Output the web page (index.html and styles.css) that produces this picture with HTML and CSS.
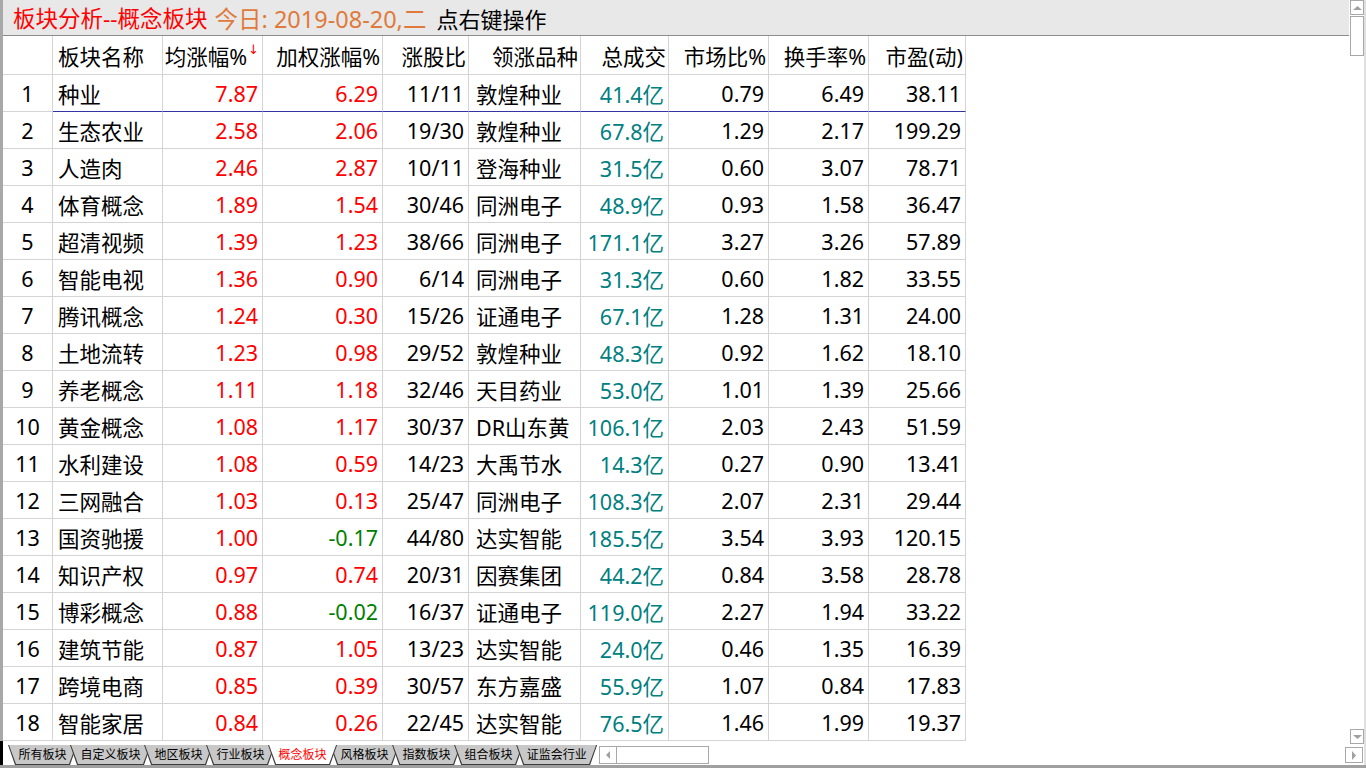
FILE: index.html
```html
<!DOCTYPE html>
<html lang="zh-CN">
<head>
<meta charset="utf-8">
<title>板块分析</title>
<link rel="stylesheet" href="styles.css">
</head>
<body>
<div class="app">
  <div class="main">
    <div class="titlebar">
      <span class="t-red">板块分析--概念板块</span>
      <span class="t-orange">今日: 2019-08-20,二</span>
      <span class="t-black">点右键操作</span>
    </div>
    <div class="grid">
      <div class="row head">
        <div class="c num"></div>
        <div class="c name">板块名称</div>
        <div class="c r">均涨幅%<span class="arrow">↓</span></div>
        <div class="c r">加权涨幅%</div>
        <div class="c r">涨股比</div>
        <div class="c r">领涨品种</div>
        <div class="c r">总成交</div>
        <div class="c r">市场比%</div>
        <div class="c r">换手率%</div>
        <div class="c r">市盈(动)</div>
      </div>
      <div class="row sel">
        <div class="c num">1</div><div class="c name">种业</div><div class="c r up">7.87</div><div class="c r up">6.29</div><div class="c r">11/11</div><div class="c lead">敦煌种业</div><div class="c r amt">41.4亿</div><div class="c r">0.79</div><div class="c r">6.49</div><div class="c r">38.11</div>
      </div>
      <div class="row">
        <div class="c num">2</div><div class="c name">生态农业</div><div class="c r up">2.58</div><div class="c r up">2.06</div><div class="c r">19/30</div><div class="c lead">敦煌种业</div><div class="c r amt">67.8亿</div><div class="c r">1.29</div><div class="c r">2.17</div><div class="c r">199.29</div>
      </div>
      <div class="row">
        <div class="c num">3</div><div class="c name">人造肉</div><div class="c r up">2.46</div><div class="c r up">2.87</div><div class="c r">10/11</div><div class="c lead">登海种业</div><div class="c r amt">31.5亿</div><div class="c r">0.60</div><div class="c r">3.07</div><div class="c r">78.71</div>
      </div>
      <div class="row">
        <div class="c num">4</div><div class="c name">体育概念</div><div class="c r up">1.89</div><div class="c r up">1.54</div><div class="c r">30/46</div><div class="c lead">同洲电子</div><div class="c r amt">48.9亿</div><div class="c r">0.93</div><div class="c r">1.58</div><div class="c r">36.47</div>
      </div>
      <div class="row">
        <div class="c num">5</div><div class="c name">超清视频</div><div class="c r up">1.39</div><div class="c r up">1.23</div><div class="c r">38/66</div><div class="c lead">同洲电子</div><div class="c r amt">171.1亿</div><div class="c r">3.27</div><div class="c r">3.26</div><div class="c r">57.89</div>
      </div>
      <div class="row">
        <div class="c num">6</div><div class="c name">智能电视</div><div class="c r up">1.36</div><div class="c r up">0.90</div><div class="c r">6/14</div><div class="c lead">同洲电子</div><div class="c r amt">31.3亿</div><div class="c r">0.60</div><div class="c r">1.82</div><div class="c r">33.55</div>
      </div>
      <div class="row">
        <div class="c num">7</div><div class="c name">腾讯概念</div><div class="c r up">1.24</div><div class="c r up">0.30</div><div class="c r">15/26</div><div class="c lead">证通电子</div><div class="c r amt">67.1亿</div><div class="c r">1.28</div><div class="c r">1.31</div><div class="c r">24.00</div>
      </div>
      <div class="row">
        <div class="c num">8</div><div class="c name">土地流转</div><div class="c r up">1.23</div><div class="c r up">0.98</div><div class="c r">29/52</div><div class="c lead">敦煌种业</div><div class="c r amt">48.3亿</div><div class="c r">0.92</div><div class="c r">1.62</div><div class="c r">18.10</div>
      </div>
      <div class="row">
        <div class="c num">9</div><div class="c name">养老概念</div><div class="c r up">1.11</div><div class="c r up">1.18</div><div class="c r">32/46</div><div class="c lead">天目药业</div><div class="c r amt">53.0亿</div><div class="c r">1.01</div><div class="c r">1.39</div><div class="c r">25.66</div>
      </div>
      <div class="row">
        <div class="c num">10</div><div class="c name">黄金概念</div><div class="c r up">1.08</div><div class="c r up">1.17</div><div class="c r">30/37</div><div class="c lead">DR山东黄</div><div class="c r amt">106.1亿</div><div class="c r">2.03</div><div class="c r">2.43</div><div class="c r">51.59</div>
      </div>
      <div class="row">
        <div class="c num">11</div><div class="c name">水利建设</div><div class="c r up">1.08</div><div class="c r up">0.59</div><div class="c r">14/23</div><div class="c lead">大禹节水</div><div class="c r amt">14.3亿</div><div class="c r">0.27</div><div class="c r">0.90</div><div class="c r">13.41</div>
      </div>
      <div class="row">
        <div class="c num">12</div><div class="c name">三网融合</div><div class="c r up">1.03</div><div class="c r up">0.13</div><div class="c r">25/47</div><div class="c lead">同洲电子</div><div class="c r amt">108.3亿</div><div class="c r">2.07</div><div class="c r">2.31</div><div class="c r">29.44</div>
      </div>
      <div class="row">
        <div class="c num">13</div><div class="c name">国资驰援</div><div class="c r up">1.00</div><div class="c r down">-0.17</div><div class="c r">44/80</div><div class="c lead">达实智能</div><div class="c r amt">185.5亿</div><div class="c r">3.54</div><div class="c r">3.93</div><div class="c r">120.15</div>
      </div>
      <div class="row">
        <div class="c num">14</div><div class="c name">知识产权</div><div class="c r up">0.97</div><div class="c r up">0.74</div><div class="c r">20/31</div><div class="c lead">因赛集团</div><div class="c r amt">44.2亿</div><div class="c r">0.84</div><div class="c r">3.58</div><div class="c r">28.78</div>
      </div>
      <div class="row">
        <div class="c num">15</div><div class="c name">博彩概念</div><div class="c r up">0.88</div><div class="c r down">-0.02</div><div class="c r">16/37</div><div class="c lead">证通电子</div><div class="c r amt">119.0亿</div><div class="c r">2.27</div><div class="c r">1.94</div><div class="c r">33.22</div>
      </div>
      <div class="row">
        <div class="c num">16</div><div class="c name">建筑节能</div><div class="c r up">0.87</div><div class="c r up">1.05</div><div class="c r">13/23</div><div class="c lead">达实智能</div><div class="c r amt">24.0亿</div><div class="c r">0.46</div><div class="c r">1.35</div><div class="c r">16.39</div>
      </div>
      <div class="row">
        <div class="c num">17</div><div class="c name">跨境电商</div><div class="c r up">0.85</div><div class="c r up">0.39</div><div class="c r">30/57</div><div class="c lead">东方嘉盛</div><div class="c r amt">55.9亿</div><div class="c r">1.07</div><div class="c r">0.84</div><div class="c r">17.83</div>
      </div>
      <div class="row">
        <div class="c num">18</div><div class="c name">智能家居</div><div class="c r up">0.84</div><div class="c r up">0.26</div><div class="c r">22/45</div><div class="c lead">达实智能</div><div class="c r amt">76.5亿</div><div class="c r">1.46</div><div class="c r">1.99</div><div class="c r">19.37</div>
      </div>
    </div>
    <div class="bottombar">
      <div class="tabs">
        <div class="tab"><div class="tab-in">所有板块</div></div>
        <div class="tab"><div class="tab-in">自定义板块</div></div>
        <div class="tab"><div class="tab-in">地区板块</div></div>
        <div class="tab"><div class="tab-in">行业板块</div></div>
        <div class="tab active"><div class="tab-in">概念板块</div></div>
        <div class="tab"><div class="tab-in">风格板块</div></div>
        <div class="tab"><div class="tab-in">指数板块</div></div>
        <div class="tab"><div class="tab-in">组合板块</div></div>
        <div class="tab"><div class="tab-in">证监会行业</div></div>
      </div>
      <div class="hscroll">
        <div class="hs-btn"><svg width="6" height="8" viewBox="0 0 6 8"><polygon points="5,0 5,8 1,4" fill="#a0a0a0"/></svg></div>
        <div class="hs-track"></div>
      </div>
    </div>
  </div>
  <div class="vscroll">
    <div class="vs-btn"><svg width="9" height="6" viewBox="0 0 9 6"><polygon points="0,5 9,5 4.5,1" fill="#a0a0a0"/></svg></div>
    <div class="vs-thumb"></div>
    <div class="vs-space"></div>
    <div class="vs-btn"><svg width="9" height="6" viewBox="0 0 9 6"><polygon points="0,1 9,1 4.5,5" fill="#a0a0a0"/></svg></div>
    <div class="vs-corner"><div class="vs-btn right"><svg width="6" height="9" viewBox="0 0 6 9"><polygon points="1,0 1,9 5,4.5" fill="#a0a0a0"/></svg></div></div>
  </div>
</div>
<div class="bottomline"></div>
</body>
</html>
```

FILE: styles.css
```css
html, body {
  margin: 0;
  padding: 0;
  background: #ffffff;
}
body {
  width: 1366px;
  height: 768px;
  overflow: hidden;
  font-family: "Noto Sans", "Noto Sans CJK SC", sans-serif;
  color: #000;
}
.app {
  display: flex;
  height: 765px;
}
.main {
  width: 1345px;
  border-left: 3px solid #a8a8a8;
  display: flex;
  flex-direction: column;
}
.titlebar {
  height: 35px;
  border-bottom: 1px solid #8c8c8c;
  background: #e8e8e8;
  display: flex;
  align-items: center;
  padding-left: 10px;
  font-size: 22.5px;
  white-space: nowrap;
  width: 1336px;
}
.t-red { color: #ff0000; }
.t-orange { color: #e07a3c; margin-left: 7px; font-size: 23.5px; }
.t-black { color: #000; margin-left: 10px; font-size: 22px; }
.grid {
  height: 705px;
  overflow: hidden;
}
.row {
  display: grid;
  grid-template-columns: 50px 110px 100px 120px 86px 112px 88px 100px 100px 97px;
  height: 37px;
}
.row.head {
  height: 39px;
}
.c {
  box-sizing: border-box;
  border-right: 1px solid #d4d4d4;
  border-bottom: 1px solid #d4d4d4;
  display: flex;
  align-items: center;
  font-size: 21.5px;
  white-space: nowrap;
  overflow: hidden;
}
.c.num {
  justify-content: center;
}
.c.name {
  padding-left: 5px;
}
.c.lead {
  padding-left: 7px;
}
.c.r {
  justify-content: flex-end;
  padding-right: 4px;
}
.row.head .c.r {
  padding-right: 2px;
}
.arrow {
  color: #ff0000;
  font-size: 13px;
  align-self: flex-start;
  margin-top: 6px;
  margin-left: 1px;
  margin-right: 1px;
  font-family: "DejaVu Sans", sans-serif;
}
.up { color: #ff0000; }
.down { color: #008000; }
.amt { color: #008080; }
.row.sel .c:not(.num) {
  border-bottom-color: #3333a6;
}
.bottombar {
  flex: 1;
  display: flex;
  align-items: flex-start;
  border-left: 3px solid #000;
  margin-left: -3px;
  padding-top: 4px;
}
.tabs {
  display: flex;
  padding-left: 12px;
}
.tab {
  height: 20px;
  background: #3c3c3c;
  clip-path: polygon(0 0, 100% 0, calc(100% - 7px) 100%, 7px 100%);
  margin-left: -7px;
  position: relative;
}
.tab-in {
  height: 19px;
  margin: 0 1px 0 1px;
  padding: 0 9.5px;
  background: #c8c8c8;
  clip-path: polygon(0 0, 100% 0, calc(100% - 7px) 100%, 7px 100%);
  font-family: "Noto Sans CJK SC", sans-serif;
  font-size: 12px;
  line-height: 18px;
  color: #000;
  white-space: nowrap;
}
.tab.active {
  z-index: 2;
}
.tab.active .tab-in {
  background: #ffffff;
  color: #ff0000;
}
.hscroll {
  display: flex;
  height: 16px;
  width: 108px;
  border: 1px solid #a8a8a8;
  margin-left: 2px;
  margin-top: 1px;
}
.hs-btn {
  width: 16px;
  border-right: 1px solid #a8a8a8;
  display: flex;
  align-items: center;
  justify-content: center;
}
.hs-track {
  flex: 1;
}
.vscroll {
  display: flex;
  flex-direction: column;
  border-right: 2px solid #e0e0e0;
  box-sizing: border-box;
  width: 18px;
  padding-left: 2px;
}
.vs-btn {
  width: 14px;
  height: 15px;
  box-sizing: border-box;
  border: 1px solid #a8a8a8;
  display: flex;
  align-items: center;
  justify-content: center;
}
.vs-thumb {
  width: 14px;
  height: 40px;
  box-sizing: border-box;
  border: 1px solid #a8a8a8;
  margin-top: 1px;
}
.vs-space {
  flex: 1;
}
.vs-corner {
  height: 21px;
  padding-top: 3px;
  box-sizing: border-box;
  margin-left: -5px;
}
.vs-btn.right {
  width: 18px;
  height: 16px;
}
.bottomline {
  height: 3px;
  background: #a0a0a0;
}
```
